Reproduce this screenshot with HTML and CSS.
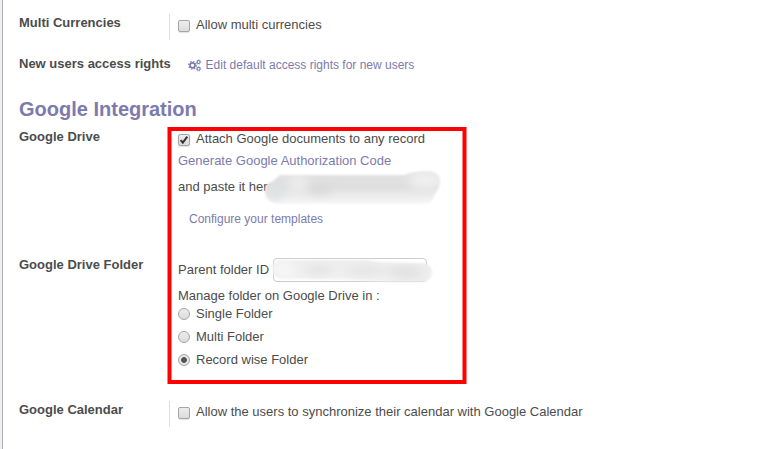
FILE: index.html
```html
<!DOCTYPE html>
<html lang="en">
<head>
<meta charset="utf-8">
<title>General Settings</title>
<link rel="stylesheet" href="styles.css">
</head>
<body>
<main class="sheet">
  <section class="row row-currencies">
    <div class="label">Multi Currencies</div>
    <div class="field ruled">
      <label class="option"><span class="check"></span>Allow multi currencies</label>
    </div>
  </section>
  <section class="row row-access">
    <div class="label">New users access rights</div>
    <div class="field">
      <a class="action">
        <svg class="gears" width="14" height="13" viewBox="0 0 14 13" fill="none" stroke="currentColor">
          <circle cx="4.5" cy="6.3" r="2.5" stroke-width="1.7"/>
          <circle cx="4.5" cy="6.3" r="3.8" stroke-width="1.3" stroke-dasharray="1.5 1.484"/>
          <circle cx="10.6" cy="3" r="1.5" stroke-width="1.1"/>
          <circle cx="10.6" cy="3" r="2.2" stroke-width=".7" stroke-dasharray="1 .728"/>
          <circle cx="10.6" cy="9.8" r="1.5" stroke-width="1.1"/>
          <circle cx="10.6" cy="9.8" r="2.2" stroke-width=".7" stroke-dasharray="1 .728"/>
        </svg>Edit default access rights for new users</a>
    </div>
  </section>
  <h2 class="title">Google Integration</h2>
  <div class="google">
    <section class="row row-drive">
      <div class="label">Google Drive</div>
      <div class="field">
        <label class="option attach"><span class="check"><svg class="tick" width="12" height="12" viewBox="0 0 12 12"><path d="M2.6 6.2 4.8 8.7 9.3 2.6" fill="none" stroke="#333" stroke-width="2"/></svg></span>Attach Google documents to any record</label>
        <a class="generate">Generate Google Authorization Code</a>
        <div class="paste">and paste it here
          <svg class="smudge smudge-code" width="184" height="40" viewBox="0 0 184 40">
            <defs>
              <filter id="edge" x="-5%" y="-15%" width="110%" height="130%"><feGaussianBlur stdDeviation=".8"/></filter>
              <filter id="soft" x="-50%" y="-100%" width="200%" height="300%"><feGaussianBlur stdDeviation="5"/></filter>
              <linearGradient id="codeFill" x1="0" y1="0" x2="0" y2="1">
                <stop offset="0" stop-color="#e2e2e2"/><stop offset=".5" stop-color="#dfdfdf"/><stop offset="1" stop-color="#f8f8f8"/>
              </linearGradient>
              <path id="codeOutline" d="M9 11 16 5H140Q150 1 164 1 176 2 176 12 175 19 171 24 169 34 158 34H14Q1 32 1 21 2 13 9 11Z"/>
              <clipPath id="codeShape"><use href="#codeOutline"/></clipPath>
            </defs>
            <g filter="url(#edge)">
              <use href="#codeOutline" fill="url(#codeFill)"/>
              <g clip-path="url(#codeShape)">
                <g filter="url(#soft)">
                  <ellipse cx="34" cy="14" rx="10" ry="10" fill="#ececec"/>
                  <ellipse cx="55" cy="20" rx="12" ry="4" fill="#d6d6d6"/>
                  <ellipse cx="162" cy="10" rx="17" ry="9" fill="#f0f0f0"/>
                </g>
                <circle cx="11" cy="22" r="9" fill="#dfe1e4" filter="url(#soft)"/>
              </g>
            </g>
          </svg>
        </div>
        <a class="templates">Configure your templates</a>
      </div>
    </section>
    <section class="row row-folder">
      <div class="label">Google Drive Folder</div>
      <div class="field">
        <div class="parent">Parent folder ID<span class="input"></span>
          <svg class="smudge smudge-id" width="166" height="28" viewBox="0 0 166 28">
            <defs>
              <path id="idOutline" d="M8 3H98Q110 6 150 6 161 6 161 16 160 25 150 25H112Q98 22 12 22 1 21 1 12 2 4 8 3Z"/>
              <clipPath id="idShape"><use href="#idOutline"/></clipPath>
            </defs>
            <g filter="url(#edge)">
              <use href="#idOutline" fill="#eee"/>
              <g clip-path="url(#idShape)">
                <g filter="url(#soft)">
                  <ellipse cx="12" cy="12" rx="14" ry="10" fill="#f5f5f5"/>
                  <ellipse cx="48" cy="14" rx="14" ry="4" fill="#e0e0e0"/>
                  <ellipse cx="94" cy="15" rx="20" ry="4" fill="#e1e1e1"/>
                  <ellipse cx="134" cy="15" rx="18" ry="6" fill="#e0e0e0"/>
                  <ellipse cx="70" cy="24" rx="60" ry="3" fill="#f8f8f8"/>
                </g>
              </g>
            </g>
          </svg>
        </div>
        <div class="manage">Manage folder on Google Drive in :</div>
        <label class="choice"><span class="radio"></span>Single Folder</label>
        <label class="choice"><span class="radio"></span>Multi Folder</label>
        <label class="choice"><span class="radio selected"></span>Record wise Folder</label>
      </div>
    </section>
    <svg class="highlight" width="300" height="257" viewBox="0 0 300 257"><rect x="2.5" y="2" width="295" height="253" fill="none" stroke="#f00" stroke-width="4"/></svg>
  </div>
  <section class="row row-calendar">
    <div class="label">Google Calendar</div>
    <div class="field ruled">
      <label class="option"><span class="check"></span>Allow the users to synchronize their calendar with Google Calendar</label>
    </div>
  </section>
</main>
</body>
</html>
```
FILE: styles.css
```css
* { box-sizing: border-box; }
body {
  margin: 0;
  height: 449px;
  overflow: hidden;
  background: #eee;
  color: #4c4c4c;
  font: 13px/18px "Liberation Sans", Arial, sans-serif;
  white-space: nowrap;
}
.sheet {
  height: 449px;
  margin-left: 2px;
  padding: 14px 0 0 16px;
  border-left: 1px solid #afafb6;
  background: #fff;
}
.row { display: grid; grid-template-columns: 150px 1fr; }
.label { font-weight: bold; }
.field { padding-left: 9px; }
.ruled { padding-left: 8px; border-left: 1px solid #ddd; }
.row-currencies, .row-access, .row-calendar { height: 26px; }
.row-access { margin-top: 15px; }
.row-drive { height: 128px; }
.row-folder { height: 145px; }

.option { display: flex; align-items: center; height: 22px; }
.check {
  width: 12px;
  height: 12px;
  margin: 2px 6px 0 0;
  border: 1px solid #a5a5a5;
  border-radius: 2px;
  background: linear-gradient(#ededed, #dcdcdc);
  box-shadow: 0 1px 1px #e4e4e4;
}
.tick { display: block; margin: -1px; }
.title { margin: 17px 0 8px; color: #7c7bad; font-size: 20px; line-height: 22px; }

a { color: #7c7bad; }
.action { display: flex; align-items: center; height: 20px; padding-left: 9.6px; font-size: 12px; }
.gears { margin-right: 4px; }

.google { position: relative; }
.generate { display: block; height: 22px; line-height: 22px; }
.paste { position: relative; height: 30px; line-height: 30px; }
.templates { display: block; height: 34px; padding-left: 11px; font-size: 12px; line-height: 34px; }

.parent { position: relative; display: flex; align-items: center; height: 28px; }
.input { width: 154px; height: 24px; margin-left: 4px; border: 1px solid #ccc; border-radius: 4px; }
.manage { height: 19px; line-height: 24px; }
.choice { display: flex; align-items: center; height: 22px; margin-bottom: 1px; }
.radio {
  width: 12px;
  height: 12px;
  margin-right: 6px;
  border: 1px solid #a5a5a5;
  border-radius: 50%;
  background: linear-gradient(#ededed, #dcdcdc);
}
.selected { background: radial-gradient(circle, #555 0 2.5px, #e5e5e5 3.3px); }

.smudge { position: absolute; }
.smudge-code { left: 86px; top: -2px; }
.smudge-id { left: 93px; top: 1px; }
.highlight { position: absolute; left: 148px; top: -1px; }
```
